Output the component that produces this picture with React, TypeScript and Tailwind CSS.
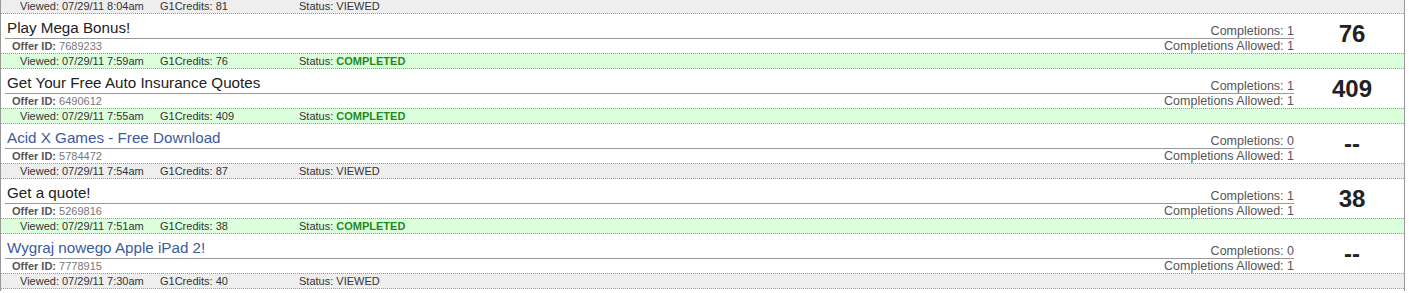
import React from "react";

type Offer = {
  title: string;
  link?: boolean;
  id: string;
  completions: number;
  allowed: number;
  credits: string;
  viewed: string;
  g1: number;
  completed: boolean;
};

const OFFERS: Offer[] = [
  { title: "Play Mega Bonus!", id: "7689233", completions: 1, allowed: 1, credits: "76", viewed: "07/29/11 7:59am", g1: 76, completed: true },
  { title: "Get Your Free Auto Insurance Quotes", id: "6490612", completions: 1, allowed: 1, credits: "409", viewed: "07/29/11 7:55am", g1: 409, completed: true },
  { title: "Acid X Games - Free Download", link: true, id: "5784472", completions: 0, allowed: 1, credits: "--", viewed: "07/29/11 7:54am", g1: 87, completed: false },
  { title: "Get a quote!", id: "5269816", completions: 1, allowed: 1, credits: "38", viewed: "07/29/11 7:51am", g1: 38, completed: true },
  { title: "Wygraj nowego Apple iPad 2!", link: true, id: "7778915", completions: 0, allowed: 1, credits: "--", viewed: "07/29/11 7:30am", g1: 40, completed: false },
];

const ViewedRow = ({ viewed, g1, completed, className = "" }: { viewed: string; g1: number; completed: boolean; className?: string }) => (
  <div
    className={`flex h-[16px] items-center border-y border-dotted border-[#999] pl-[19px] text-[11px] leading-[14px] text-[#333] ${
      completed ? "bg-[#ddfedd]" : "bg-[#eeeeee]"
    } ${className}`}
  >
    <span className="w-[140px]">Viewed: {viewed}</span>
    <span className="w-[139px]">G1Credits: {g1}</span>
    <span>
      Status:{" "}
      {completed ? <b className="font-bold text-[#1d8a1d]">COMPLETED</b> : "VIEWED"}
    </span>
  </div>
);

const OfferRow = ({ o }: { o: Offer }) => (
  <div>
    <div className="flex">
      <div className="ml-[4px] w-[1289px]">
        <div className="flex h-[25px] items-end justify-between border-b border-[#999]">
          <span
            className={`pl-[2px] text-[15.2px] leading-[20px] ${o.link ? "text-[#3b5b9e]" : "text-[#222]"}`}
          >
            {o.title}
          </span>
          <span className="text-[12.5px] leading-[14px] text-[#555]">Completions: {o.completions}</span>
        </div>
        <div className="flex h-[14px] items-center justify-between">
          <span className="pl-[7px] text-[11px] leading-[14px] text-[#777]">
            <b className="font-bold text-[#555]">Offer ID:</b> {o.id}
          </span>
          <span className="text-[12.5px] leading-[14px] text-[#555]">Completions Allowed: {o.allowed}</span>
        </div>
      </div>
      <div className="flex flex-1 items-center justify-center pl-[6px] text-[24px] font-bold leading-none text-[#222]">
        {o.credits}
      </div>
    </div>
    <ViewedRow viewed={o.viewed} g1={o.g1} completed={o.completed} />
  </div>
);

export default function App() {
  return (
    <div className="h-[293px] overflow-hidden bg-white font-['Liberation_Sans',Arial,sans-serif]">
      <div className="h-full w-[1405px] border-x border-[#999]">
        <ViewedRow viewed="07/29/11 8:04am" g1={81} completed={false} className="-mt-[2px]" />
        {OFFERS.map((o) => (
          <OfferRow key={o.id} o={o} />
        ))}
      </div>
    </div>
  );
}
